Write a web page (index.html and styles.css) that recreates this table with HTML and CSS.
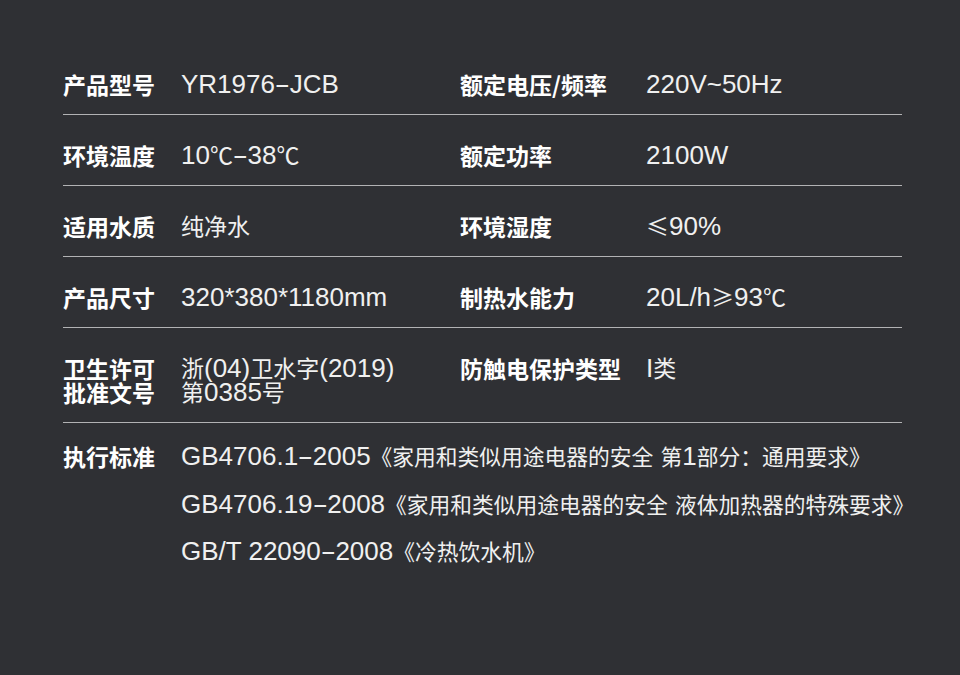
FILE: index.html
```html
<!DOCTYPE html>
<html lang="zh-CN">
<head>
<meta charset="utf-8">
<title>产品参数</title>
<link rel="stylesheet" href="styles.css">
</head>
<body>
<div class="spec">
  <div class="row">
    <div class="k">产品型号</div>
    <div class="v">YR1976<span class="d">-</span>JCB</div>
    <div class="k">额定电压/频率</div>
    <div class="v">220V~50Hz</div>
  </div>
  <div class="row">
    <div class="k">环境温度</div>
    <div class="v">10<span class="c">℃</span><span class="d">-</span>38<span class="c">℃</span></div>
    <div class="k">额定功率</div>
    <div class="v">2100W</div>
  </div>
  <div class="row">
    <div class="k">适用水质</div>
    <div class="v"><span class="c">纯净水</span></div>
    <div class="k">环境湿度</div>
    <div class="v"><span class="c">≤</span>90%</div>
  </div>
  <div class="row">
    <div class="k">产品尺寸</div>
    <div class="v">320*380*1180mm</div>
    <div class="k">制热水能力</div>
    <div class="v">20L/h<span class="c">≥</span>93<span class="c">℃</span></div>
  </div>
  <div class="row">
    <div class="k">卫生许可<br>批准文号</div>
    <div class="v"><span class="c">浙</span>(04)<span class="c">卫水字</span>(2019)<br><span class="c">第</span>0385<span class="c">号</span></div>
    <div class="k">防触电保护类型</div>
    <div class="v">I<span class="c">类</span></div>
  </div>
  <div class="std">
    <div class="k">执行标准</div>
    <div class="list">
      <div class="v">GB4706.1<span class="d">-</span>2005<span class="c">《家用和类似用途电器的安全</span> <span class="c">第</span>1<span class="c">部分：通用要求》</span></div>
      <div class="v">GB4706.19<span class="d">-</span>2008<span class="c">《家用和类似用途电器的安全</span> <span class="c">液体加热器的特殊要求》</span></div>
      <div class="v">GB/T 22090<span class="d">-</span>2008<span class="c">《冷热饮水机》</span></div>
    </div>
  </div>
</div>
</body>
</html>
```

FILE: styles.css
```css
html, body {
  margin: 0;
  padding: 0;
  background: #2f3034;
}

body {
  width: 960px;
  height: 675px;
  overflow: hidden;
}

.spec {
  width: 839px;
  padding: 44px 0 0 63px;
}

.row {
  display: grid;
  grid-template-columns: 118px 279px 186px 1fr;
  align-items: start;
  padding: 28px 0 18px;
  border-bottom: 1px solid #b2b2b4;
  line-height: 24px;
}

.k {
  font-family: "Noto Sans CJK SC", sans-serif;
  font-weight: 700;
  font-size: 23px;
  line-height: 24px;
  color: #ffffff;
  white-space: nowrap;
}

.v {
  font-family: "Liberation Sans", "Noto Sans CJK SC", sans-serif;
  font-size: 26px;
  line-height: 24px;
  color: #f0f0f0;
  white-space: nowrap;
}

.c {
  font-family: "Noto Sans CJK SC", sans-serif;
  font-size: 23px;
  line-height: 16px;
}

.d {
  display: inline-block;
  line-height: 16px;
  transform: scaleX(1.8);
  margin: 0 3px;
}

.std {
  display: grid;
  grid-template-columns: 118px 1fr;
  align-items: start;
  padding-top: 21px;
  line-height: 24px;
}

.list {
  display: flex;
  flex-direction: column;
  gap: 23.5px;
}

.std .c {
  font-size: 21.75px;
}
```
